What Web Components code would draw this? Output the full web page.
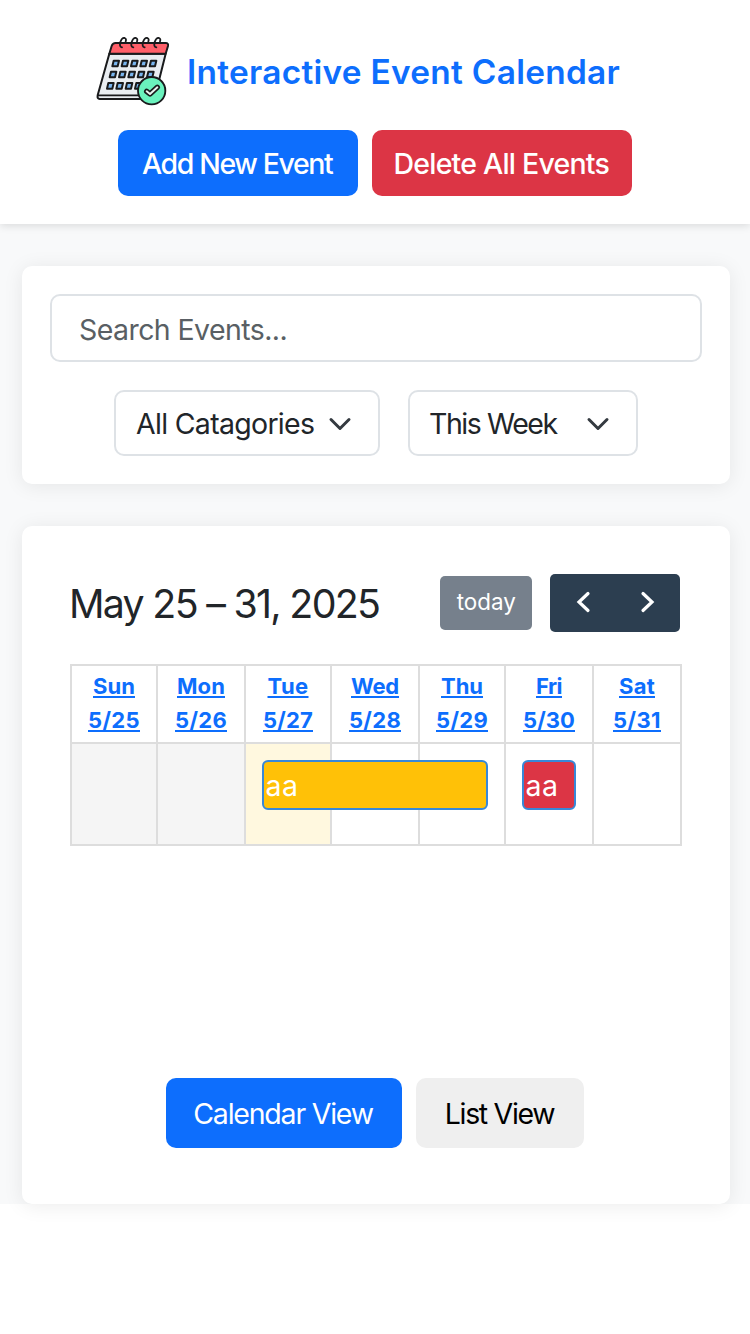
<!DOCTYPE html>
<html lang="en">
<head>
<meta charset="utf-8">
<title>Interactive Event Calendar</title>
<style>
html{background:#fff}
body{margin:0;min-height:1334px;font-family:Inter,"Open Sans",sans-serif;color:#212529}
</style>
</head>
<body>
<event-app></event-app>
<script>
const define = (name, html, init) => customElements.define(name, class extends HTMLElement {
  connectedCallback() {
    if (this.shadowRoot) return;
    const t = document.createElement('template');
    t.innerHTML = html;
    this.attachShadow({mode: 'open'}).append(t.content.cloneNode(true));
    if (init) init.call(this);
  }
});

/* Text tracked out to a given width; "box" measures advances instead of ink. */
const ctx = document.createElement('canvas').getContext('2d');
define('fit-text', `<style>:host{display:block;white-space:nowrap;font-kerning:normal}span{display:inline-block}
:host([box]) span{text-decoration:underline;text-decoration-thickness:2px;text-underline-offset:2px;text-decoration-skip-ink:none}</style><span><slot></slot></span>`, function () {
  const w = +this.getAttribute('w'), s = this.getAttribute('s'), wt = this.getAttribute('wt') || 400;
  const text = this.textContent;
  this.style.cssText = `width:${w}px;font-size:${s}px;font-weight:${wt}`;
  ctx.font = `${wt} ${s}px Inter, "Open Sans", sans-serif`;
  const m = ctx.measureText(text);
  if (this.hasAttribute('box')) {
    this.style.letterSpacing = (w - m.width) / text.length + 'px';
  } else {
    const ink = m.actualBoundingBoxRight + m.actualBoundingBoxLeft;
    this.style.letterSpacing = (w - ink) / (text.length - 1) + 'px';
    this.shadowRoot.querySelector('span').style.marginLeft = m.actualBoundingBoxLeft + 'px';
  }
});

define('calendar-logo', `<style>:host{display:block;width:74px;height:70px}svg{display:block}</style>
<svg width="74" height="70" viewBox="48 33 222 210" fill="none" stroke="#191a1c" stroke-width="6" stroke-linejoin="round" stroke-linecap="round">
<path d="M88 86H257L226 210Q223 222 211 222H59Q51 222 53 211Z" fill="#e9edf1"/>
<path d="M54 211H206" stroke-width="5"/>
<path d="M88 86L95 63Q98 54 107 54H257Q266 54 264 63L257 86Z" fill="#ff5f69"/>
<g stroke-width="5.5"><path id="r" d="M126 67Q117 65 121 51Q126 37 134 39Q140 41 137 49"/><use href="#r" x="34"/><use href="#r" x="68"/><use href="#r" x="103"/></g>
<g fill="#78b5ef" stroke-width="6"><path id="c" d="M101 107H117L113 124H97Z"/><use href="#c" x="28"/><use href="#c" x="56"/><use href="#c" x="84"/><use href="#c" x="112"/>
<use href="#c" x="-8" y="33"/><use href="#c" x="20" y="33"/><use href="#c" x="48" y="33"/><use href="#c" x="76" y="33"/><use href="#c" x="104" y="33"/>
<use href="#c" x="-16" y="67"/><use href="#c" x="12" y="67"/><use href="#c" x="40" y="67"/><use href="#c" x="68" y="67"/></g>
<circle cx="215" cy="197" r="41" fill="#6af2bd" stroke-width="5.5"/>
<path d="M200 199L210 207L232 187" stroke-width="16"/><path d="M200 199L210 207L232 187" stroke="#e9f4f0" stroke-width="6"/>
</svg>`);

define('app-button', `<style>:host{display:flex;box-sizing:border-box;border-radius:10px;justify-content:center;align-items:center;color:#fff;background:#0d6efd}
:host([kind=danger]){background:#dc3545}:host([kind=plain]){background:#efefef;color:#000}</style><slot></slot>`);

define('app-header', `<style>
:host{display:block;box-sizing:border-box;height:224px;background:#fff;padding-top:36px;box-shadow:0 2px 8px rgba(0,0,0,.12);position:relative}
.brand{display:flex;align-items:center;margin-left:96px;gap:19px;color:#0d6efd;height:70px}
.brand fit-text{padding-top:2px}
.actions{display:flex;gap:14px;margin:24px 0 0 118px}
app-button{height:66px;width:240px}app-button[kind]{width:260px;padding-left:1px}
</style>
<div class="brand"><calendar-logo></calendar-logo><fit-text w="430.5" s="33.4" wt="600">Interactive Event Calendar</fit-text></div>
<div class="actions"><app-button><fit-text w="192" s="28.5" wt="500">Add New Event</fit-text></app-button>
<app-button kind="danger"><fit-text w="214" s="28.5" wt="500">Delete All Events</fit-text></app-button></div>`);

define('app-card', `<style>:host{display:block;box-sizing:border-box;margin:0 20px 0 22px;background:#fff;border-radius:10px;box-shadow:0 2px 20px rgba(0,0,0,.08)}</style><slot></slot>`);

define('drop-down', `<style>:host{display:flex;box-sizing:border-box;height:66px;border:2px solid #dee2e6;border-radius:10px;align-items:center;justify-content:space-between;padding:0 26px 0 20px}
svg{display:block;margin-top:1px}</style><slot></slot>
<svg width="24" height="24" viewBox="0 0 16 16" fill="none" stroke="#343a40" stroke-width="2" stroke-linecap="round" stroke-linejoin="round"><path d="m2 5 6 6 6-6"/></svg>`);

define('event-filters', `<style>
:host{display:block;padding:28px}
.search{box-sizing:border-box;height:68px;border:2px solid #dee2e6;border-radius:10px;display:flex;align-items:center;padding:2px 0 0 28px;color:#595f64}
.row{display:flex;gap:28px;margin:28px 0 0 64px}
</style>
<div class="search"><fit-text w="205.5" s="28.5" wt="375">Search Events...</fit-text></div>
<div class="row"><drop-down style="width:266px"><fit-text w="178" s="28.5" wt="375">All Catagories</fit-text></drop-down>
<drop-down style="width:230px"><fit-text w="128.5" s="28.5" wt="375">This Week</fit-text></drop-down></div>`);

define('calendar-toolbar', `<style>
:host{display:flex;height:58px;align-items:center;color:#212529}
.title{flex:1;padding-left:2px;padding-top:1px}
.today{width:92px;height:54px;border-radius:5px;background:#76808c;color:#fff;display:flex;align-items:center;justify-content:center;box-sizing:border-box;padding-bottom:3px}
.nav{width:130px;height:58px;border-radius:5px;background:#2c3e50;margin-left:18px;display:flex;align-items:center;box-sizing:border-box;padding:0 23px 0 24px;justify-content:space-between}
svg{display:block;margin-top:-2px}
</style>
<div class="title"><fit-text w="307" s="39.3" wt="420">May 25 – 31, 2025</fit-text></div>
<div class="today"><fit-text w="58.5" s="22.4" wt="400">today</fit-text></div>
<div class="nav"><svg width="20" height="24" viewBox="0 0 20 24" fill="none" stroke="#fff" stroke-width="3.2" stroke-linecap="round"><path d="M14 3.5L5 12L14 20.5"/></svg>
<svg width="20" height="24" viewBox="0 0 20 24" fill="none" stroke="#fff" stroke-width="3.2" stroke-linecap="round"><path d="M6 3.5L15 12L6 20.5"/></svg></div>`);

define('day-head', `<style>:host{display:flex;flex-direction:column;align-items:center;box-sizing:border-box;height:78px;padding-top:3px;border:2px solid #ddd;border-width:2px 0 0 2px;color:#0d6efd;line-height:34px}</style><div id="d"></div><div id="n"></div>`, function () {
  const [day, dw, num, nw] = this.getAttribute('data').split(' ');
  const r = this.shadowRoot;
  r.getElementById('d').innerHTML = `<fit-text box w="${dw}" s="22" wt="700">${day}</fit-text>`;
  r.getElementById('n').innerHTML = `<fit-text box w="${nw}" s="22" wt="700">${num}</fit-text>`;
});

define('calendar-event', `<style>:host{display:flex;box-sizing:border-box;height:50px;border:2px solid #3788d8;border-radius:6px;color:#fff;align-items:center;padding:0 0 0 2.5px;z-index:1}</style><slot></slot>`);

define('week-grid', `<style>
:host{display:grid;box-sizing:border-box;width:612px;height:182px;grid-template-columns:86px 88px 86px 88px 86px 88px 88px;grid-template-rows:78px 102px;border:solid #ddd;border-width:0 2px 2px 0}
.c{border:2px solid #ddd;border-width:2px 0 0 2px;grid-row:2}
.past{background:#f5f5f5}.now{background:#fff8df}
calendar-event{grid-row:2;margin:18px 16px 0 18px}
</style>
<day-head data="Sun 42 5/25 52"></day-head><day-head data="Mon 48 5/26 52"></day-head><day-head data="Tue 41 5/27 50"></day-head><day-head data="Wed 48 5/28 52"></day-head><day-head data="Thu 42 5/29 52"></day-head><day-head data="Fri 26 5/30 52"></day-head><day-head data="Sat 36 5/31 48"></day-head>
<div class="c past" style="grid-column:1"></div><div class="c past" style="grid-column:2"></div><div class="c now" style="grid-column:3"></div><div class="c" style="grid-column:4"></div><div class="c" style="grid-column:5"></div><div class="c" style="grid-column:6"></div><div class="c" style="grid-column:7"></div>
<calendar-event style="grid-column:3/6;background:#ffc107"><fit-text w="29.5" s="28.5" wt="390">aa</fit-text></calendar-event>
<calendar-event style="grid-column:6;background:#dc3545"><fit-text w="29.5" s="28.5" wt="390">aa</fit-text></calendar-event>`);

define('event-calendar', `<style>
:host{display:flex;flex-direction:column;box-sizing:border-box;height:678px;padding:48px 50px 56px 48px}
week-grid{margin-top:32px}
.views{display:flex;gap:14px;margin:auto 0 0 96px}
app-button{height:70px;width:236px}app-button[kind]{width:168px;padding-left:2px}
</style><calendar-toolbar></calendar-toolbar><week-grid></week-grid>
<div class="views"><app-button><fit-text w="179.5" s="28.5" wt="400">Calendar View</fit-text></app-button>
<app-button kind="plain"><fit-text w="108.5" s="28.5" wt="375">List View</fit-text></app-button></div>`);

define('event-app', `<style>:host{display:block}main{background:#f8f9fa;height:980px;box-sizing:border-box;padding-top:42px}
app-card+app-card{margin-top:42px}.f{height:218px}</style>
<app-header></app-header><main><app-card class="f"><event-filters></event-filters></app-card><app-card><event-calendar></event-calendar></app-card></main>`);
</script>
</body>
</html>
